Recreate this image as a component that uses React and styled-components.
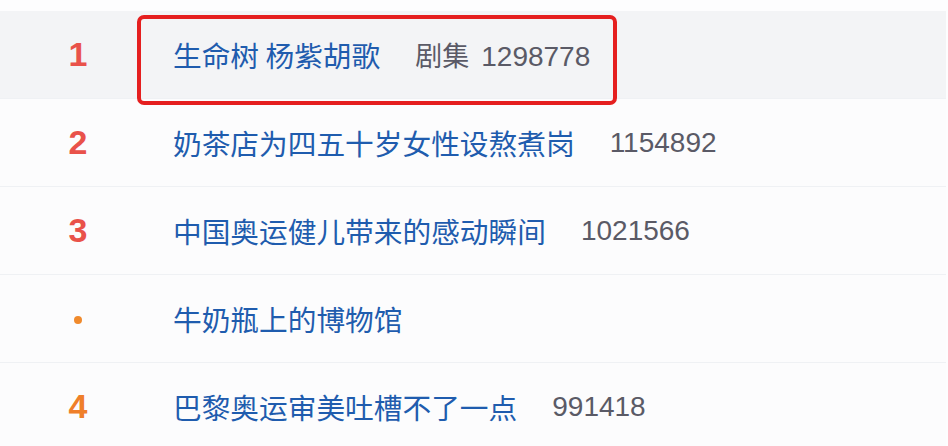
import React from "react";
import styled, { createGlobalStyle } from "styled-components";

const items = [
  { rank: "1", tone: "red", title: "生命树 杨紫胡歌", tag: "剧集", count: "1298778", active: true, marked: true },
  { rank: "2", tone: "red", title: "奶茶店为四五十岁女性设熬煮岗", count: "1154892" },
  { rank: "3", tone: "red", title: "中国奥运健儿带来的感动瞬间", count: "1021566" },
  { rank: null, tone: "dot", title: "牛奶瓶上的博物馆" },
  { rank: "4", tone: "orange", title: "巴黎奥运审美吐槽不了一点", count: "991418" },
];

const GlobalStyle = createGlobalStyle`
  html, body {
    margin: 0;
    background: #fdfdfe;
  }
  body {
    font-family: "Liberation Sans", "Noto Sans CJK SC", sans-serif;
  }
`;

const List = styled.ul`
  list-style: none;
  margin: 0;
  padding: 11px 2px 0 0;
  width: 946px;
`;

const Row = styled.li`
  position: relative;
  display: flex;
  align-items: center;
  height: 87px;
  border-bottom: 1px solid #eff1f4;
  background: ${(p) => (p.$active ? "#f3f4f6" : "#fcfcfd")};
`;

const toneColor = {
  red: "#e9524a",
  orange: "#ef7f2a",
  dot: "#f08a2c",
};

const Rank = styled.span`
  width: 156px;
  display: flex;
  justify-content: center;
  font-family: "Liberation Sans", sans-serif;
  font-weight: bold;
  font-size: 34px;
  color: ${(p) => toneColor[p.$tone]};
  flex: none;
`;

const Dot = styled.i`
  width: 8px;
  height: 8px;
  border-radius: 50%;
  background: #f08a2c;
  margin-top: 2px;
`;

const Title = styled.a`
  margin-left: 17px;
  font-family: "Noto Sans CJK SC", sans-serif;
  font-size: 28.7px;
  color: #1f5cae;
  text-decoration: none;
  white-space: pre;
`;

const Meta = styled.span`
  margin-left: 35px;
  font-size: 28px;
  color: #5a5a66;
  white-space: pre;
  display: flex;
  align-items: baseline;
  gap: 12px;
`;

const Tag = styled.span`
  font-family: "Noto Sans CJK SC", sans-serif;
  font-size: 27px;
`;

const Count = styled.span`
  font-family: "Liberation Sans", sans-serif;
`;

const Marker = styled.div`
  position: absolute;
  z-index: 1;
  left: 137px;
  top: 4px;
  width: 480px;
  height: 90px;
  box-sizing: border-box;
  border: 4px solid #e51f1f;
  border-radius: 7px;
  pointer-events: none;
`;

export default function App() {
  return (
    <>
      <GlobalStyle />
      <List>
        {items.map((it) => (
          <Row key={it.title} $active={it.active}>
            <Rank $tone={it.tone}>{it.rank ?? <Dot />}</Rank>
            <Title href="#">{it.title}</Title>
            {(it.tag || it.count) && (
              <Meta>
                {it.tag && <Tag>{it.tag}</Tag>}
                {it.count && <Count>{it.count}</Count>}
              </Meta>
            )}
            {it.marked && <Marker />}
          </Row>
        ))}
      </List>
    </>
  );
}
